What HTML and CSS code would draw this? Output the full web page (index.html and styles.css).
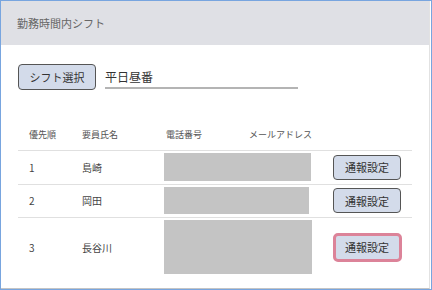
FILE: index.html
```html
<!DOCTYPE html>
<html lang="ja">
<head>
<meta charset="utf-8">
<link rel="stylesheet" href="styles.css">
</head>
<body>
<div class="frame">
  <div class="panel">
    <div class="panel-head">勤務時間内シフト</div>
    <div class="panel-body">
      <div class="shift-row">
        <button class="btn btn-shift">シフト選択</button>
        <div class="shift-input">平日昼番</div>
      </div>
      <div class="table">
        <div class="row row-head">
          <div class="cell c-pri">優先順</div>
          <div class="cell">要員氏名</div>
          <div class="cell c-tel">電話番号</div>
          <div class="cell">メールアドレス</div>
          <div class="cell"></div>
        </div>
        <div class="row">
          <div class="cell c-pri">1</div>
          <div class="cell">島崎</div>
          <div class="cell c-mask"><div class="mask mask-1"></div></div>
          <div class="cell c-act"><button class="btn btn-notify">通報設定</button></div>
        </div>
        <div class="row">
          <div class="cell c-pri">2</div>
          <div class="cell">岡田</div>
          <div class="cell c-mask"><div class="mask mask-2"></div></div>
          <div class="cell c-act"><button class="btn btn-notify">通報設定</button></div>
        </div>
        <div class="row row-last">
          <div class="cell c-pri">3</div>
          <div class="cell">長谷川</div>
          <div class="cell c-mask"><div class="mask mask-3"></div></div>
          <div class="cell c-act"><button class="btn btn-notify btn-focus">通報設定</button></div>
        </div>
      </div>
    </div>
  </div>
</div>
</body>
</html>
```
FILE: styles.css
```css
* { box-sizing: border-box; }
html, body { margin: 0; padding: 0; background: #fff; }
body { font-family: "Noto Sans CJK JP", "Noto Sans", sans-serif; color: #333; }

.frame {
  width: 432px;
  height: 290px;
  border: 1px solid #78a5df;
  background: #fff;
}
.panel {
  width: 429px;
  height: 288px;
  border-right: 1px solid #e2e2e2;
  border-bottom: 1px solid #c4c4c4;
  display: flex;
  flex-direction: column;
}
.panel-head {
  height: 44px;
  background: #dfe0e5;
  display: flex;
  align-items: center;
  padding-left: 16px;
  font-size: 11px;
  color: #666;
}
.panel-body {
  padding: 19px 16px 0 17px;
}
.shift-row {
  display: flex;
  align-items: flex-start;
  gap: 9px;
}
.btn {
  font-family: "Noto Sans CJK JP", sans-serif;
  background: #d3dbea;
  border: 1px solid #555;
  border-radius: 4px;
  color: #333;
  padding: 0;
  display: flex;
  align-items: center;
  justify-content: center;
}
.btn-shift {
  width: 78px;
  height: 26px;
  font-size: 11px;
}
.shift-input {
  width: 193px;
  height: 25px;
  border-bottom: 2px solid #b4b4b4;
  font-size: 12px;
  color: #333;
  display: flex;
  align-items: center;
  padding-top: 1px;
}

.table {
  margin-top: 28px;
  width: 394px;
}
.row {
  display: grid;
  grid-template-columns: 64px 82px 85px 73px 90px;
  align-items: center;
  border-bottom: 1px solid #e0e0e0;
  padding: 2px 0 3px;
  font-size: 10px;
  color: #444;
}
.row-head {
  height: 33px;
  padding: 0;
  font-size: 9px;
  color: #555;
}
.row-last { border-bottom: none; }
.c-pri { padding-left: 11px; }
.c-tel { padding-left: 2px; }
.c-mask { grid-column: span 2; }
.mask { background: #c4c4c4; }
.mask-1 { width: 147px; height: 28px; }
.mask-2 { width: 145px; height: 27px; }
.mask-3 { width: 148px; height: 54px; }
.c-act {
  display: flex;
  justify-content: center;
}
.btn-notify {
  width: 68px;
  height: 25px;
  font-size: 11px;
}
.btn-focus {
  width: 69px;
  height: 29px;
  border: 3px solid #dc8399;
  border-radius: 5px;
}
```
